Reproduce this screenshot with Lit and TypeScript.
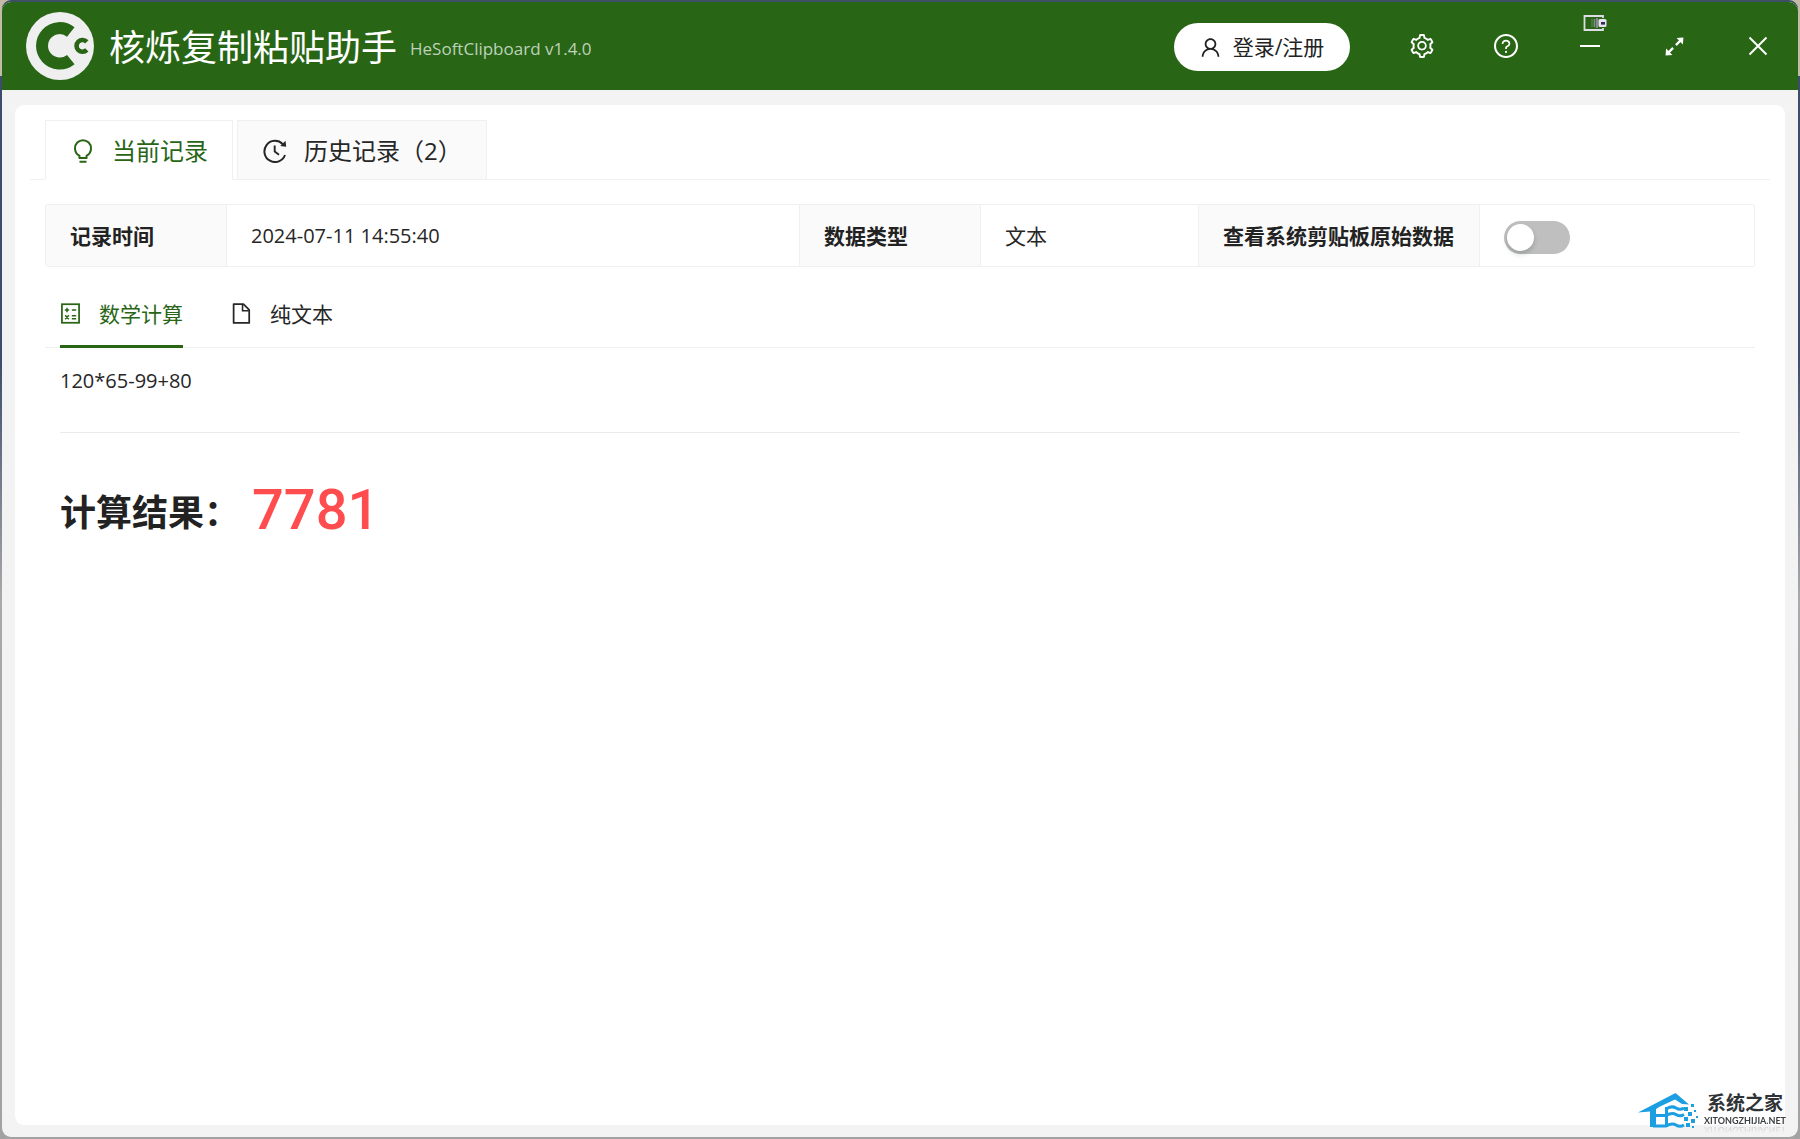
import { LitElement, html, css, svg } from "lit";
import { customElement, property, state } from "lit/decorators.js";

const filled = (d: string) => svg`<path fill="currentColor" d=${d} />`;

const GEAR =
  "M924.8 625.7l-65.5-56c3.1-19 4.7-38.4 4.7-57.8s-1.6-38.8-4.7-57.8l65.5-56a32.03 32.03 0 009.3-35.2l-.9-2.6a443.74 443.74 0 00-79.7-137.9l-1.8-2.1a32.12 32.12 0 00-35.1-9.5l-81.3 28.9c-30-24.6-63.5-44-99.7-57.6l-15.7-85a32.05 32.05 0 00-25.8-25.7l-2.7-.5c-52.1-9.4-106.9-9.4-159 0l-2.7.5a32.05 32.05 0 00-25.8 25.7l-15.8 85.4a351.86 351.86 0 00-99 57.4l-81.9-29.1a32 32 0 00-35.1 9.5l-1.8 2.1a446.02 446.02 0 00-79.7 137.9l-.9 2.6c-4.5 12.5-.8 26.5 9.3 35.2l66.3 56.6c-3.1 18.8-4.6 38-4.6 57.1 0 19.2 1.5 38.4 4.6 57.1L99 625.5a32.03 32.03 0 00-9.3 35.2l.9 2.6c18.1 50.4 44.9 96.9 79.7 137.9l1.8 2.1a32.12 32.12 0 0035.1 9.5l81.9-29.1c29.8 24.5 63.1 43.9 99 57.4l15.8 85.4a32.05 32.05 0 0025.8 25.7l2.7.5a449.4 449.4 0 00159 0l2.7-.5a32.05 32.05 0 0025.8-25.7l15.7-85a350 350 0 0099.7-57.6l81.3 28.9a32 32 0 0035.1-9.5l1.8-2.1c34.8-41.1 61.6-87.5 79.7-137.9l.9-2.6c4.5-12.3.8-26.3-9.3-35zM788.3 465.9c2.5 15.1 3.8 30.6 3.8 46.1s-1.3 31-3.8 46.1l-6.6 40.1 74.7 63.9a370.03 370.03 0 01-42.6 73.6L721 702.8l-31.4 25.8c-23.9 19.6-50.5 35-79.3 45.8l-38.1 14.3-17.9 97a377.5 377.5 0 01-85 0l-17.9-97.2-37.8-14.5c-28.5-10.8-55-26.2-78.7-45.7l-31.4-25.9-93.4 33.2c-17-22.9-31.2-47.6-42.6-73.6l75.5-64.5-6.5-40c-2.4-14.9-3.7-30.3-3.7-45.5 0-15.3 1.2-30.6 3.7-45.5l6.5-40-75.5-64.5c11.3-26.1 25.6-50.7 42.6-73.6l93.4 33.2 31.4-25.9c23.7-19.5 50.2-34.9 78.7-45.7l37.9-14.3 17.9-97.2c28.1-3.2 56.8-3.2 85 0l17.9 97 38.1 14.3c28.7 10.8 55.4 26.2 79.3 45.8l31.4 25.8 92.8-32.9c17 22.9 31.2 47.6 42.6 73.6L781.8 426l6.5 39.9zM512 326c-97.2 0-176 78.8-176 176s78.8 176 176 176 176-78.8 176-176-78.8-176-176-176zm79.2 255.2A111.6 111.6 0 01512 614c-29.9 0-58-11.7-79.2-32.8A111.6 111.6 0 01400 502c0-29.9 11.7-58 32.8-79.2C454 401.6 482.1 390 512 390c29.9 0 58 11.6 79.2 32.8A111.6 111.6 0 01624 502c0 29.9-11.7 58-32.8 79.2z";
const HELP =
  "M512 64C264.6 64 64 264.6 64 512s200.6 448 448 448 448-200.6 448-448S759.4 64 512 64zm0 820c-205.4 0-372-166.6-372-372s166.6-372 372-372 372 166.6 372 372-166.6 372-372 372zM623.6 316.7C593.6 290.4 554 276 512 276s-81.6 14.5-111.6 40.7C369.2 344 352 380.7 352 420v7.6c0 4.4 3.6 8 8 8h48c4.4 0 8-3.6 8-8V420c0-44.1 43.1-80 96-80s96 35.9 96 80c0 31.1-22 59.6-56.1 72.7-21.2 8.1-39.2 22.3-52.1 40.9-13.1 19-19.9 41.8-19.9 64.9V620c0 4.4 3.6 8 8 8h48c4.4 0 8-3.6 8-8v-22.7a48.3 48.3 0 0130.9-44.8c59-22.7 97.1-74.7 97.1-132.5.1-39.3-17.1-76-48.3-103.3zM472 732a40 40 0 1080 0 40 40 0 10-80 0z";
const USER =
  "M858.5 763.6a374 374 0 00-80.6-119.5 375.63 375.63 0 00-119.5-80.6c-.4-.2-.8-.3-1.2-.5C719.5 518 760 444.7 760 362c0-137-111-248-248-248S264 225 264 362c0 82.7 40.5 156 102.8 201.1-.4.2-.8.3-1.2.5-44.8 18.9-85 46-119.5 80.6a375.63 375.63 0 00-80.6 119.5A371.7 371.7 0 00136 901.8a8 8 0 008 8.2h60c4.4 0 7.9-3.5 8-7.8 2-77.2 33-149.5 87.8-204.3 56.7-56.7 132-87.9 212.2-87.9s155.5 31.2 212.2 87.9C779 752.7 810 825 812 902.2c.1 4.4 3.6 7.8 8 7.8h60a8 8 0 008-8.2c-1-47.8-10.9-94.3-29.5-138.2zM512 534c-45.9 0-89.1-17.9-121.6-50.4S340 407.9 340 362c0-45.9 17.9-89.1 50.4-121.6S466.1 190 512 190s89.1 17.9 121.6 50.4S684 316.1 684 362c0 45.9-17.9 89.1-50.4 121.6S557.9 534 512 534z";

const ICONS: Record<string, { box: string; body: unknown }> = {
  gear: { box: "64 64 896 896", body: filled(GEAR) },
  help: { box: "64 64 896 896", body: filled(HELP) },
  user: { box: "64 64 896 896", body: filled(USER) },
  minimize: { box: "0 0 24 24", body: svg`<path d="M2 12H22" stroke-width="2" />` },
  expand: {
    box: "0 0 24 24",
    body: svg`<path d="M13.6 10.4L19 5M10.4 13.6L5 19" stroke-width="2.6" />
      <path d="M14.4 2.4L22.2 1.8L21.6 9.6ZM9.6 21.6L1.8 22.2L2.4 14.4Z" fill="currentColor" stroke="none" />`,
  },
  close: { box: "0 0 24 24", body: svg`<path d="M3.5 3.5L20.5 20.5M20.5 3.5L3.5 20.5" stroke-width="2" />` },
  bulb: {
    box: "0 0 24 24",
    body: svg`<path d="M8.4 19V16.6C5.6 15.3 4 12.6 4 9.2A8 8 0 0 1 20 9.2C20 12.6 18.4 15.3 15.6 16.6V19Z" stroke-width="2" stroke-linejoin="round" />
      <path d="M8.5 22.8H15.5" stroke-width="2" />`,
  },
  history: {
    box: "0 0 24 24",
    body: svg`<path d="M19.6 5A10.6 10.6 0 1 0 22 16" stroke-width="2" />
      <path d="M17.2 7.1L23.2 7.8L22.5 1.8Z" fill="currentColor" stroke="none" />
      <path d="M11.7 6.4V12.6L16 15.8" stroke-width="1.9" />`,
  },
  calc: {
    box: "0 0 24 24",
    body: svg`<rect x="2.2" y="1.4" width="19.6" height="21.2" stroke-width="2" />
      <path d="M5.5 8H10.5M8 5.5V10.5M13.5 8H18.5M13.5 14.7H18.5M13.5 17.9H18.5M5.9 14L10.1 18.6M10.1 14L5.9 18.6" stroke-width="1.7" />`,
  },
  file: {
    box: "0 0 24 24",
    body: svg`<path d="M3 1.2H14.2L20.8 7.8V22.8H3Z" stroke-width="2" stroke-linejoin="round" />
      <path d="M13.2 1.8V8.8H20.2" stroke-width="1.8" />`,
  },
};

@customElement("ui-icon")
export class UiIcon extends LitElement {
  @property() name = "";
  static styles = css`
    :host {
      display: block;
      flex: none;
      width: 24px;
      height: 24px;
    }
    .icon {
      display: block;
      width: 100%;
      height: 100%;
    }
  `;
  render() {
    const icon = ICONS[this.name];
    const strokes = icon.box === "0 0 24 24";
    return html`<svg class="icon" viewBox=${icon.box} fill="none" stroke=${strokes ? "currentColor" : "none"} aria-hidden="true">${icon.body}</svg>`;
  }
}

@customElement("title-bar")
export class TitleBar extends LitElement {
  static styles = css`
    :host {
      display: block;
    }
    .bar {
      display: flex;
      align-items: center;
      height: 88px;
      padding: 0 16px 0 24px;
      box-sizing: border-box;
      background: #286616;
      color: #fff;
    }
    .logo {
      width: 68px;
      height: 68px;
      flex: none;
      margin-right: 15px;
    }
    .name {
      margin: 0;
      padding-top: 4px;
      font-size: 36px;
      line-height: 48px;
      font-weight: 400;
      white-space: nowrap;
    }
    .version {
      margin-left: 13px;
      padding-top: 6px;
      font-size: 17px;
      line-height: 24px;
      color: #bed1b9;
      white-space: nowrap;
    }
    .actions {
      display: flex;
      align-items: center;
      margin-left: auto;
      gap: 36px;
    }
    .login {
      display: flex;
      align-items: center;
      justify-content: center;
      gap: 12px;
      width: 176px;
      height: 48px;
      margin: 2px 12px 0 0;
      padding: 0;
      border: 0;
      border-radius: 24px;
      background: #fff;
      color: #222;
      font: inherit;
      font-size: 21px;
      line-height: 32px;
      white-space: nowrap;
    }
    .tool {
      position: relative;
      display: grid;
      place-items: center;
      width: 48px;
      height: 48px;
      padding: 0;
      border: 0;
      background: none;
      color: #fff;
    }
    .badge {
      position: absolute;
      left: 17px;
      top: -8px;
      width: 24px;
      height: 18px;
    }
    .small {
      width: 21px;
      height: 21px;
    }
  `;
  render() {
    return html`
      <header class="bar">
        <svg class="logo" viewBox="0 0 68 68" fill="none" aria-hidden="true">
          <circle cx="34" cy="34" r="34" fill="#efefef" />
          <path d="M44.8 20A17.700 17.700 0 1 0 44.8 47.600" stroke="#286616" stroke-width="12" />
          <circle cx="56.400" cy="33.900" r="10.400" fill="#efefef" />
          <path d="M60.8 29.900A5.900 5.900 0 1 0 60.8 37.900" stroke="#286616" stroke-width="4.600" />
        </svg>
        <h1 class="name">核烁复制粘贴助手</h1>
        <span class="version">HeSoftClipboard v1.4.0</span>
        <div class="actions">
          <button class="login" type="button"><ui-icon class="small" name="user"></ui-icon>登录/注册</button>
          <button class="tool" type="button" aria-label="设置"><ui-icon name="gear"></ui-icon></button>
          <button class="tool" type="button" aria-label="帮助"><ui-icon name="help"></ui-icon></button>
          <button class="tool" type="button" aria-label="最小化">
            <ui-icon name="minimize"></ui-icon>
            <svg class="badge" viewBox="0 0 24 18" fill="none" aria-hidden="true">
              <path d="M20 4V2H1.5V16H20V14" stroke="#dcdce4" stroke-width="1.8" />
              <path d="M9 5V13" stroke="#4b7443" stroke-width="2" />
              <path d="M11.5 5V13" stroke="#7d9280" stroke-width="1.6" />
              <path d="M14 4V14" stroke="#8a8694" stroke-width="2" />
              <rect x="15.5" y="5" width="8" height="8" rx="1.5" fill="#e6e4ee" />
              <rect x="18" y="8" width="4" height="2.6" fill="#3a2a55" />
            </svg>
          </button>
          <button class="tool" type="button" aria-label="最大化"><ui-icon class="small" name="expand"></ui-icon></button>
          <button class="tool" type="button" aria-label="关闭"><ui-icon name="close"></ui-icon></button>
        </div>
      </header>
    `;
  }
}

@customElement("site-mark")
export class SiteMark extends LitElement {
  static styles = css`
    :host {
      display: flex;
      align-items: flex-end;
      gap: 6px;
    }
    .house {
      display: block;
      width: 60px;
      height: 36px;
    }
    .words {
      display: flex;
      flex-direction: column;
      align-items: center;
      padding-bottom: 2px;
    }
    .site {
      font-size: 19px;
      line-height: 24px;
      font-weight: 700;
      color: #2f3336;
      white-space: nowrap;
    }
    .domain {
      font-family: Lato, "Open Sans", sans-serif;
      font-size: 9px;
      line-height: 12px;
      font-weight: 700;
      color: #3c4043;
      -webkit-box-reflect: below -3px linear-gradient(transparent 20%, rgba(0, 0, 0, 0.25));
    }
  `;
  render() {
    return html`
      <svg class="house" viewBox="0 0 60 36" fill="none" aria-hidden="true">
        <path fill="#1c9fe2" d="M0 19.500L37.500 0L51 11.500L44 11L37 6.500L22 13.500L18 16V34H12V18.500Z" />
        <path stroke="#1c9fe2" stroke-width="3" d="M18 22.500H28Q34 19 38 21.500T46 21.500M29 15.500Q34 12.500 38 15T46 15M15 33H28Q34 29.500 38 32T46 32M28.500 14V34" />
        <path fill="#1c9fe2" d="M46 14H50V18H46ZM53 11H56V14H53ZM50 19H54V23H50ZM56 17H58V19H56ZM46 24H50V28H46ZM53 26H57V30H53ZM58 23H60V25H58ZM48 30H52V34H48ZM54 33H56V35H54Z" />
      </svg>
      <div class="words">
        <span class="site">系统之家</span>
        <span class="domain">XITONGZHIJIA.NET</span>
      </div>
    `;
  }
}

@customElement("app-root")
export class AppRoot extends LitElement {
  @state() private raw = false;
  static styles = css`
    :host {
      display: flex;
      min-height: 100vh;
      box-sizing: border-box;
      padding: 2px;
      font-family: "Open Sans", "Noto Sans CJK SC", sans-serif;
      color: #262626;
      background: linear-gradient(#c3bba6 0 76px, #3d4d6b 76px 360px, #a9a9ab 600px, #a2a2a2);
    }
    .window {
      position: relative;
      flex: 1;
      display: flex;
      flex-direction: column;
      min-width: 0;
      overflow: hidden;
      border-radius: 9px;
      background: #f3f3f3;
      box-shadow: 0 -2px 0 #3d5065;
    }
    .card {
      flex: 1;
      margin: 15px 13px 12px;
      padding: 15px;
      border-radius: 9px;
      background: #fff;
    }
    .tabs {
      display: flex;
      gap: 4px;
      padding: 0 15px;
      box-shadow: inset 0 -1px #f0f0f0;
    }
    .tab {
      display: flex;
      align-items: center;
      gap: 17px;
      height: 60px;
      padding: 2px 24px 0 25px;
      border: 1px solid #f0f0f0;
      background: #fafafa;
      color: #262626;
      font: inherit;
      font-size: 24px;
      line-height: 36px;
      white-space: nowrap;
    }
    .tab.active {
      border-bottom-color: #fff;
      background: #fff;
      color: #286616;
    }
    .content {
      padding: 24px 15px 0;
    }
    .info {
      width: 100%;
      table-layout: fixed;
      border-collapse: separate;
      border-spacing: 0;
      border: 1px solid #f0f0f0;
      border-right: 0;
      border-radius: 3px;
      font-size: 21px;
      line-height: 32px;
      white-space: nowrap;
    }
    .info th,
    .info td {
      box-sizing: border-box;
      height: 61px;
      padding: 0 24px;
      border-right: 1px solid #f0f0f0;
      text-align: left;
    }
    .info th {
      background: #fafafa;
      font-weight: 700;
      color: #222;
    }
    .label {
      width: 181px;
    }
    .kind {
      width: 218px;
    }
    .wide {
      width: 281px;
    }
    .option {
      width: 275px;
    }
    .info .time,
    .expression {
      font-size: 20px;
    }
    .switch {
      display: block;
      appearance: none;
      width: 66px;
      height: 33px;
      margin: 3px 0 0;
      padding: 3px;
      box-sizing: border-box;
      border-radius: 17px;
      background: #bfbfbf;
    }
    .switch::before {
      content: "";
      display: block;
      width: 27px;
      height: 27px;
      border-radius: 50%;
      background: #fff;
      box-shadow: 0 3px 5px rgba(0, 35, 11, 0.2);
    }
    .switch:checked {
      background: #286616;
    }
    .switch:checked::before {
      margin-left: auto;
    }
    .subtabs {
      display: flex;
      gap: 48px;
      margin-top: 15px;
      padding: 0 15px;
      box-shadow: inset 0 -1px #f0f0f0;
    }
    .subtab {
      display: flex;
      align-items: center;
      gap: 18px;
      height: 66px;
      padding: 0;
      border: 0;
      border-bottom: 3px solid transparent;
      background: none;
      color: #262626;
      font: inherit;
      font-size: 21px;
      line-height: 32px;
      white-space: nowrap;
    }
    .subtab.active {
      border-bottom-color: #286616;
      color: #286616;
    }
    .glyph {
      width: 21px;
      height: 21px;
    }
    .result {
      padding: 15px 15px 0;
    }
    .expression {
      margin: 0;
      padding-bottom: 33px;
      border-bottom: 1px solid #ebebeb;
      line-height: 36px;
    }
    .answer {
      display: flex;
      align-items: center;
      margin-top: 44px;
      gap: 12px;
      white-space: nowrap;
    }
    .caption {
      margin: 0;
      font-size: 36px;
      line-height: 72px;
      font-weight: 700;
      color: #222;
    }
    .value {
      padding-bottom: 6px;
      font-family: Roboto, "Liberation Sans", sans-serif;
      font-size: 56px;
      line-height: 66px;
      font-weight: 500;
      color: #ff4d4f;
    }
    .mark {
      position: absolute;
      right: 12px;
      bottom: 8px;
    }
  `;
  render() {
    return html`
      <main class="window">
        <title-bar></title-bar>
        <section class="card">
          <div class="tabs" role="tablist">
            <button class="tab active" type="button" role="tab" aria-selected="true"><ui-icon name="bulb"></ui-icon>当前记录</button>
            <button class="tab" type="button" role="tab" aria-selected="false"><ui-icon name="history"></ui-icon>历史记录（2）</button>
          </div>
          <div class="content">
            <table class="info">
              <tbody>
                <tr>
                  <th class="label" scope="row">记录时间</th>
                  <td class="time">2024-07-11 14:55:40</td>
                  <th class="label" scope="row">数据类型</th>
                  <td class="kind">文本</td>
                  <th class="wide" scope="row"><label for="raw">查看系统剪贴板原始数据</label></th>
                  <td class="option">
                    <input
                      id="raw"
                      class="switch"
                      type="checkbox"
                      role="switch"
                      .checked=${this.raw}
                      @change=${(e: Event) => (this.raw = (e.target as HTMLInputElement).checked)}
                    />
                  </td>
                </tr>
              </tbody>
            </table>
            <div class="subtabs" role="tablist">
              <button class="subtab active" type="button" role="tab" aria-selected="true"><ui-icon class="glyph" name="calc"></ui-icon>数学计算</button>
              <button class="subtab" type="button" role="tab" aria-selected="false"><ui-icon class="glyph" name="file"></ui-icon>纯文本</button>
            </div>
            <div class="result">
              <p class="expression">120*65-99+80</p>
              <div class="answer">
                <h2 class="caption">计算结果：</h2>
                <output class="value">7781</output>
              </div>
            </div>
          </div>
        </section>
        <site-mark class="mark"></site-mark>
      </main>
    `;
  }
}
